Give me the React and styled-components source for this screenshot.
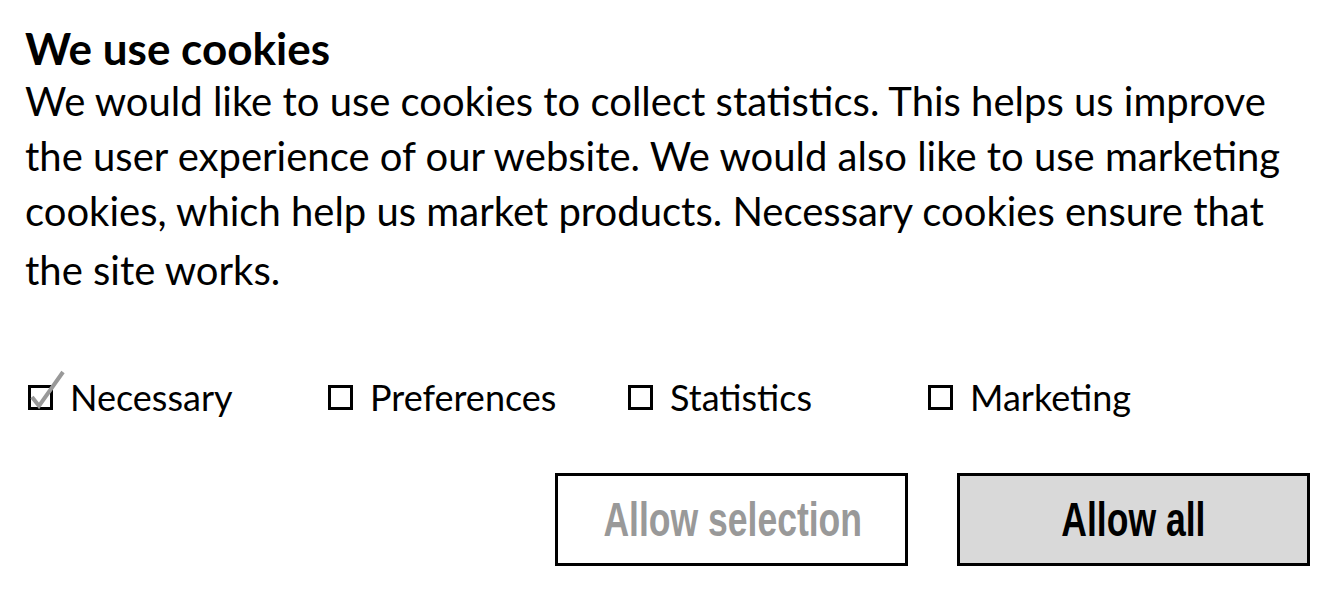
import styled, { createGlobalStyle } from "styled-components";

const Global = createGlobalStyle`
  body {
    margin: 0;
    background: #fff;
    font-family: Lato, "Open Sans", sans-serif;
    color: #000;
  }
`;

const Banner = styled.div`
  padding: 22px 25px 0 25px;
`;

const Title = styled.h1`
  margin: 0;
  font-size: 44px;
  line-height: 52px;
  font-weight: 700;
`;

const Text = styled.p`
  margin: 0;
  font-size: 40px;
  line-height: 55px;
  white-space: nowrap;
`;

const LastLine = styled.span`
  display: inline-block;
  margin-top: 4px;
`;

const Options = styled.div`
  display: grid;
  grid-template-columns: repeat(4, 300px);
  margin-top: 79px;
  padding-left: 3px;
`;

const Option = styled.label`
  display: flex;
  align-items: center;
  gap: 17px;
  font-size: 36px;
  line-height: 40px;
`;

const Box = styled.span`
  position: relative;
  width: 25px;
  height: 25px;
  box-sizing: border-box;
  border: 3px solid #000;
  flex: none;
`;

const Tick = styled.svg`
  position: absolute;
  left: -2px;
  top: -18px;
`;

const Actions = styled.div`
  display: flex;
  justify-content: flex-end;
  gap: 49px;
  margin-top: 56px;
`;

const Button = styled.button`
  width: 353px;
  height: 93px;
  box-sizing: border-box;
  border: 3px solid #000;
  background: ${(p) => (p.$primary ? "#d9d9d9" : "#fff")};
  color: ${(p) => (p.$primary ? "#000" : "#999")};
  font-family: "Liberation Sans", Arial, sans-serif;
  font-weight: 700;
  font-size: 48px;
  cursor: pointer;
  padding: 0;
`;

const Narrow = styled.span`
  display: inline-block;
  transform: scaleX(0.74);
  white-space: nowrap;
`;

function Check({ label, checked }) {
  return (
    <Option>
      <Box>
        {checked && (
          <Tick width="36" height="40" viewBox="0 0 36 40">
            <path d="M3 27 L10 36 L34 2" fill="none" stroke="#999" strokeWidth="4" />
          </Tick>
        )}
      </Box>
      {label}
    </Option>
  );
}

export default function App() {
  return (
    <>
      <Global />
      <Banner>
        <Title>We use cookies</Title>
        <Text>
          We would like to use cookies to collect statistics. This helps us improve
          <br />
          the user experience of our website. We would also like to use marketing
          <br />
          cookies, which help us market products. Necessary cookies ensure that
          <br />
          <LastLine>the site works.</LastLine>
        </Text>
        <Options>
          <Check label="Necessary" checked />
          <Check label="Preferences" />
          <Check label="Statistics" />
          <Check label="Marketing" />
        </Options>
        <Actions>
          <Button>
            <Narrow>Allow selection</Narrow>
          </Button>
          <Button $primary>
            <Narrow>Allow all</Narrow>
          </Button>
        </Actions>
      </Banner>
    </>
  );
}
